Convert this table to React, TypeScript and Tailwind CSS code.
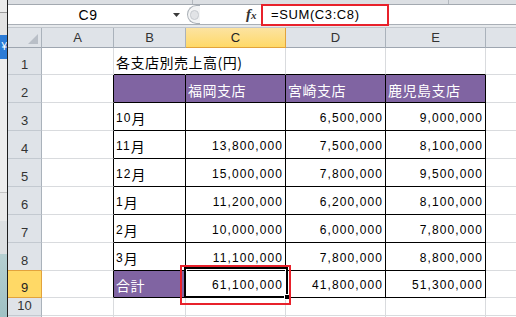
import React from "react"

const num = "font-['Liberation_Sans',sans-serif] text-[12px] tracking-[1.1px]"
const jp = "font-['Noto_Sans_CJK_JP',sans-serif] text-[14px] tracking-[0.5px]"

const R: Record<string, string> = {
    g: "border-r-[#d9dbde]",
    k: "border-r-black",
    w: "border-r-white",
}
const B: Record<string, string> = {
    g: "border-b-[#d9dbde]",
    k: "border-b-black",
}

type CellProps = {
    r?: string
    b?: string
    purple?: boolean
    right?: boolean
    clip?: boolean
    children?: React.ReactNode
}

function Cell({ r = "g", b = "g", purple, right, clip = true, children }: CellProps) {
    return (
        <div
            className={[
                "flex items-end border-r border-b whitespace-nowrap leading-[16px] pb-[4px]",
                R[r],
                B[b],
                purple ? "bg-[#8064a2] text-white" : "bg-white text-black",
                right ? "justify-end pr-[2px]" : "justify-start pl-[2px]",
                clip ? "overflow-hidden" : "overflow-visible relative z-10",
            ].join(" ")}
        >
            {children}
        </div>
    )
}

function RowHead({ n, sel, above }: { n: string; sel?: boolean; above?: boolean }) {
    return (
        <div
            className={[
                "flex items-end justify-center border-r border-b pb-[2px] text-[13px] leading-[14px] font-['Liberation_Sans',sans-serif]",
                sel
                    ? "bg-[#ffd966] border-r-[#e2a33c] border-b-[#e2a33c] text-[#222]"
                    : above
                        ? "bg-[#dfe3e8] border-r-[#aab2bb] border-b-[#e2a33c] text-[#333]"
                        : "bg-[#dfe3e8] border-r-[#aab2bb] border-b-[#c3c9d0] text-[#333]",
            ].join(" ")}
        >
            {n}
        </div>
    )
}

function ColHead({ l, sel }: { l: string; sel?: boolean }) {
    return (
        <div
            className={[
                "flex items-center justify-center border-r border-b pt-[1px] text-[13px] font-['Liberation_Sans',sans-serif]",
                sel
                    ? "bg-gradient-to-b from-[#fce3a0] to-[#ffd966] border-r-[#e2a33c] border-b-[#e2a33c] text-[#222]"
                    : "bg-[#dfe3e8] border-r-[#aab2bb] border-b-[#9ea6b0] text-[#333]",
            ].join(" ")}
        >
            {l}
        </div>
    )
}

const months = [
    ["10", "", "6,500,000", "9,000,000"],
    ["11", "13,800,000", "7,500,000", "8,100,000"],
    ["12", "15,000,000", "7,800,000", "9,500,000"],
    ["1", "11,200,000", "6,200,000", "8,100,000"],
    ["2", "10,000,000", "6,000,000", "7,800,000"],
    ["3", "11,100,000", "7,800,000", "8,800,000"],
]

function LeftStrip() {
    return (
        <div className="w-[8px] shrink-0 border-r border-r-[#1e1e1e] flex flex-col overflow-hidden">
            <div className="h-[13px] bg-[#ebebeb] border-b border-b-[#9c9c9c]" />
            <div className="h-[22px] bg-[#e3e3e3]" />
            <div className="h-[24px] bg-[#2b7bd6] flex items-center justify-end overflow-hidden">
                <span className="text-white text-[10px] leading-[12px] font-['Liberation_Sans',sans-serif]">¥</span>
            </div>
            <div className="h-[134px] bg-[#ededed] border-b border-b-[#c4c4c4]" />
            <div className="h-[28px] bg-[#e9e9e9]" />
            <div className="h-[33px] bg-[#dcdfe1]" />
            <div className="flex-1 bg-gradient-to-b from-[#b5cfd1] to-[#9fc1c4]" />
        </div>
    )
}

function FormulaBar() {
    return (
        <div className="flex flex-col shrink-0">
            <div className="h-[5px] flex bg-[#dcdfe3] border-b border-b-[#a3a9b0]">
                <div className="w-[185px] border-r border-r-[#b3b8be]" />
                <div className="w-[256px] border-r border-r-[#b3b8be]" />
                <div className="flex-1" />
            </div>
            <div className="h-[19px] flex items-center bg-white font-['Liberation_Sans',sans-serif]">
                <div className="w-[174px] flex items-center">
                    <div className="w-[160px] text-center text-[14px] tracking-[0.5px] text-black leading-[16px]">C9</div>
                    <svg width="7" height="4" viewBox="0 0 7 4" className="ml-[5px]">
                        <polygon points="0,0 7,0 3.5,4" fill="#3a3a3a" />
                    </svg>
                </div>
                <div className="ml-[5px] w-[13px] h-[19px] rounded-l-full border-l border-y border-[#aab0b7] bg-[#f3f4f5] flex items-center pl-[2px]">
                    <div className="w-[9px] h-[10px] rounded-full bg-[#e1e3e6] border border-[#c6cacf]" />
                </div>
                <div className="w-[46px]" />
                <div className="w-[15px] font-['Liberation_Serif',serif] italic font-bold text-[15px] leading-[16px] text-[#333]">
                    f<span className="text-[11px]">x</span>
                </div>
                <div className="flex-1 pl-[10px] text-[13px] tracking-[0.6px] text-black leading-[16px]">=SUM(C3:C8)</div>
            </div>
            <div className="h-[1px] bg-[#a9afb6]" />
            <div className="h-[2px] bg-[#e6e9ec]" />
            <div className="h-[1px] bg-[#c2c7cd]" />
        </div>
    )
}

function Sheet() {
    return (
        <div className="grid grid-cols-[34px_72px_72px_100px_100px_100px_100px] grid-rows-[20px_27px_28px_28px_28px_28px_28px_28px_28px_27px_18px_18px] bg-white">
            <div className="flex items-end justify-end pr-[3px] pb-[3px] bg-[#dfe3e8] border-r border-b border-r-[#aab2bb] border-b-[#9ea6b0]">
                <svg width="10" height="10" viewBox="0 0 10 10">
                    <polygon points="10,0 10,10 0,10" fill="#b9bfc7" />
                </svg>
            </div>
            <ColHead l="A" />
            <ColHead l="B" />
            <ColHead l="C" sel />
            <ColHead l="D" />
            <ColHead l="E" />
            <ColHead l="" />

            {/* row 1 */}
            <RowHead n="1" />
            <Cell />
            <Cell r="w" b="k" clip={false}>
                <span className={jp}>各支店別売上高(円)</span>
            </Cell>
            <Cell b="k" />
            <Cell b="k" />
            <Cell b="k" />
            <Cell />

            {/* row 2 */}
            <RowHead n="2" />
            <Cell r="k" />
            <Cell r="k" b="k" purple />
            <Cell r="k" b="k" purple><span className={jp}>福岡支店</span></Cell>
            <Cell r="k" b="k" purple><span className={jp}>宮崎支店</span></Cell>
            <Cell r="k" b="k" purple><span className={jp}>鹿児島支店</span></Cell>
            <Cell />

            {months.map((m, i) => (
                <React.Fragment key={m[0]}>
                    <RowHead n={String(i + 3)} above={i === 5} />
                    <Cell r="k" />
                    <Cell r="k" b="k">
                        <span className={num}>{m[0]}</span>
                        <span className={jp}>月</span>
                    </Cell>
                    <Cell r="k" b="k" right><span className={num}>{m[1]}</span></Cell>
                    <Cell r="k" b="k" right><span className={num}>{m[2]}</span></Cell>
                    <Cell r="k" b="k" right><span className={num}>{m[3]}</span></Cell>
                    <Cell />
                </React.Fragment>
            ))}

            {/* row 9 */}
            <RowHead n="9" sel />
            <Cell r="k" />
            <Cell r="k" b="k" purple><span className={jp}>合計</span></Cell>
            <Cell r="k" b="k" right><span className={num}>61,100,000</span></Cell>
            <Cell r="k" b="k" right><span className={num}>41,800,000</span></Cell>
            <Cell r="k" b="k" right><span className={num}>51,300,000</span></Cell>
            <Cell />

            {/* row 10, 11 */}
            <RowHead n="10" />
            <Cell /><Cell /><Cell /><Cell /><Cell /><Cell />
            <RowHead n="" />
            <Cell /><Cell /><Cell /><Cell /><Cell /><Cell />
        </div>
    )
}

export default function App() {
    return (
        <div className="relative w-[516px] h-[317px] overflow-hidden bg-white flex">
            <LeftStrip />
            <div className="flex-1 flex flex-col overflow-hidden">
                <FormulaBar />
                <Sheet />
            </div>

            {/* active cell C9 */}
            <div className="absolute left-[184px] top-[267px] w-[104px] h-[31px] border-2 border-black z-20">
                <div className="w-full h-full border border-white" />
            </div>
            <div className="absolute left-[284px] top-[294px] w-[6px] h-[6px] bg-black border border-white z-30" />

            {/* red annotation boxes */}
            <div className="absolute left-[261px] top-[4px] w-[128px] h-[22px] border-2 border-[#e8212b] z-30" />
            <div className="absolute left-[180px] top-[265px] w-[111px] h-[40px] border-2 border-[#e8212b] z-30" />
        </div>
    )
}
